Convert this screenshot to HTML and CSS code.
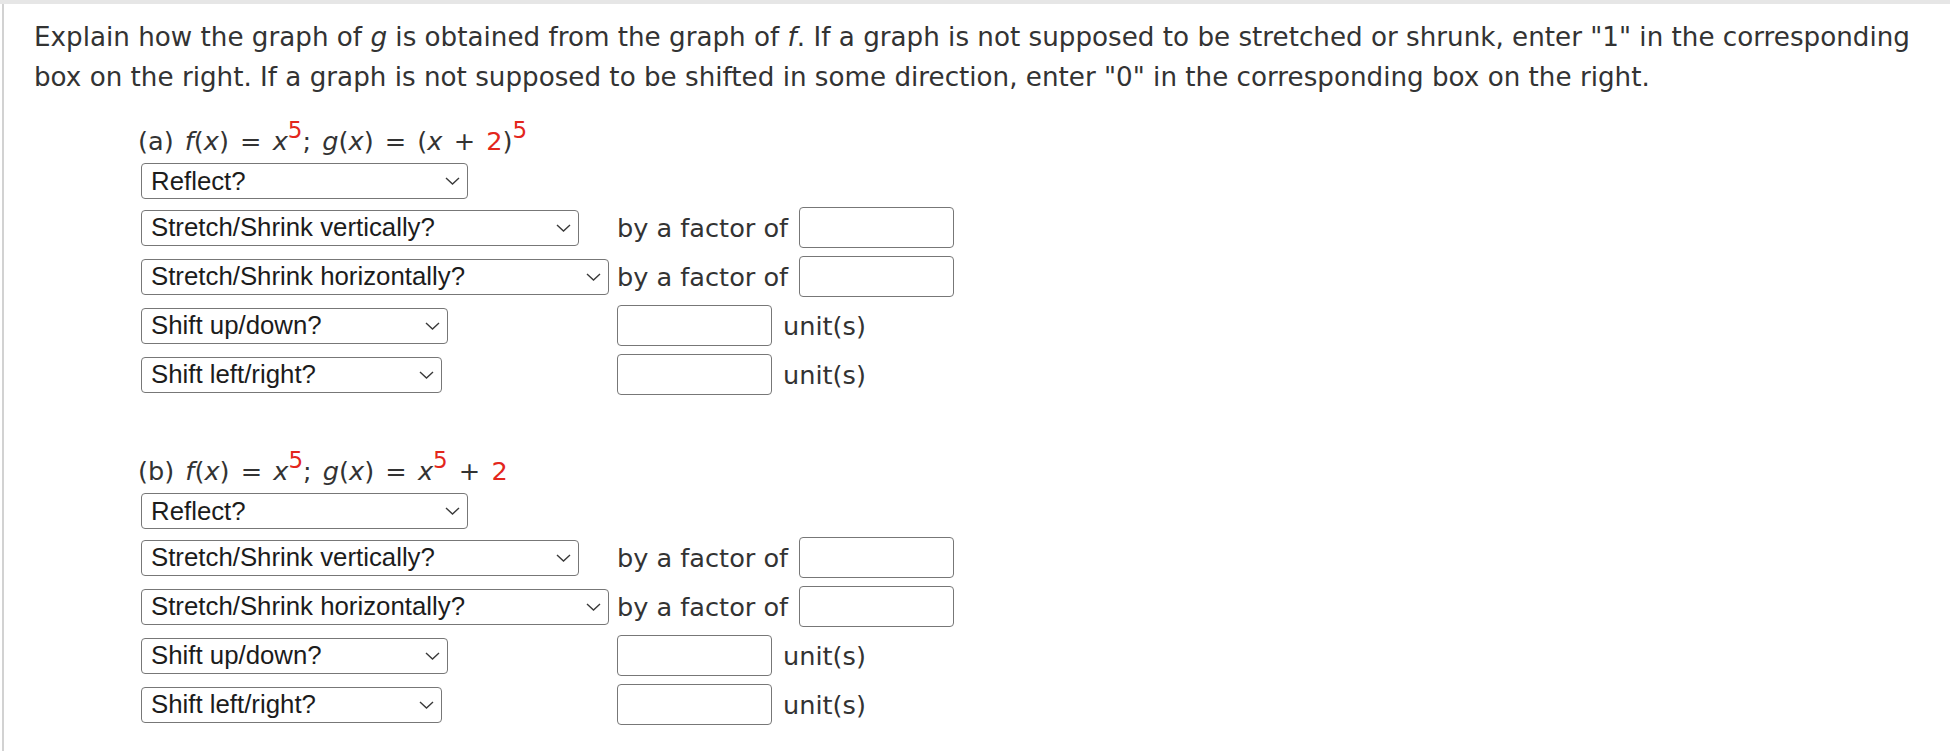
FILE: index.html
```html
<!DOCTYPE html>
<html lang="en">
<head>
<meta charset="utf-8">
<title>Transformations of graphs</title>
<link rel="stylesheet" href="styles.css">
</head>
<body>
<div class="topbar"></div>
<div class="frame">
  <p class="prompt">Explain how the graph of <i>g</i> is obtained from the graph of <i>f</i>. If a graph is not supposed to be stretched or shrunk, enter "1" in the corresponding box on the right. If a graph is not supposed to be shifted in some direction, enter "0" in the corresponding box on the right.</p>

  <section class="part">
    <div class="part-label">(a) <i>f</i>(<i>x</i>) = <i>x</i><sup class="red">5</sup>; <i>g</i>(<i>x</i>) = (<i>x</i> + <span class="red">2</span>)<sup class="red">5</sup></div>
    <div class="grid">
      <span class="sel w-reflect"><select><option>Reflect?</option></select><svg class="chev" viewBox="0 0 15 8"><path d="M1 1 L7.5 7 L14 1"/></svg></span>
      <span></span>
      <span class="sel w-vert"><select><option>Stretch/Shrink vertically?</option></select><svg class="chev" viewBox="0 0 15 8"><path d="M1 1 L7.5 7 L14 1"/></svg></span>
      <span class="cell">by a factor of <input type="text" class="box"></span>
      <span class="sel w-horiz"><select><option>Stretch/Shrink horizontally?</option></select><svg class="chev" viewBox="0 0 15 8"><path d="M1 1 L7.5 7 L14 1"/></svg></span>
      <span class="cell">by a factor of <input type="text" class="box"></span>
      <span class="sel w-updown"><select><option>Shift up/down?</option></select><svg class="chev" viewBox="0 0 15 8"><path d="M1 1 L7.5 7 L14 1"/></svg></span>
      <span class="cell"><input type="text" class="box"> unit(s)</span>
      <span class="sel w-leftright"><select><option>Shift left/right?</option></select><svg class="chev" viewBox="0 0 15 8"><path d="M1 1 L7.5 7 L14 1"/></svg></span>
      <span class="cell"><input type="text" class="box"> unit(s)</span>
    </div>
  </section>

  <section class="part">
    <div class="part-label">(b) <i>f</i>(<i>x</i>) = <i>x</i><sup class="red">5</sup>; <i>g</i>(<i>x</i>) = <i>x</i><sup class="red">5</sup> + <span class="red">2</span></div>
    <div class="grid">
      <span class="sel w-reflect"><select><option>Reflect?</option></select><svg class="chev" viewBox="0 0 15 8"><path d="M1 1 L7.5 7 L14 1"/></svg></span>
      <span></span>
      <span class="sel w-vert"><select><option>Stretch/Shrink vertically?</option></select><svg class="chev" viewBox="0 0 15 8"><path d="M1 1 L7.5 7 L14 1"/></svg></span>
      <span class="cell">by a factor of <input type="text" class="box"></span>
      <span class="sel w-horiz"><select><option>Stretch/Shrink horizontally?</option></select><svg class="chev" viewBox="0 0 15 8"><path d="M1 1 L7.5 7 L14 1"/></svg></span>
      <span class="cell">by a factor of <input type="text" class="box"></span>
      <span class="sel w-updown"><select><option>Shift up/down?</option></select><svg class="chev" viewBox="0 0 15 8"><path d="M1 1 L7.5 7 L14 1"/></svg></span>
      <span class="cell"><input type="text" class="box"> unit(s)</span>
      <span class="sel w-leftright"><select><option>Shift left/right?</option></select><svg class="chev" viewBox="0 0 15 8"><path d="M1 1 L7.5 7 L14 1"/></svg></span>
      <span class="cell"><input type="text" class="box"> unit(s)</span>
    </div>
  </section>
</div>
</body>
</html>
```

FILE: styles.css
```css
html, body {
  margin: 0;
  padding: 0;
  background: #ffffff;
}

body {
  font-family: "DejaVu Sans", Verdana, sans-serif;
  color: #333333;
}

.topbar {
  height: 4px;
  background: #e6e6e6;
}

.frame {
  margin-left: 2px;
  border-left: 2px solid #d2d2d2;
  padding: 13px 20px 0 30px;
  min-height: 747px;
  box-sizing: border-box;
}

.prompt {
  margin: 0;
  font-size: 26.2px;
  line-height: 40px;
}

.part {
  margin-left: 104px;
}

.part + .part {
  margin-top: 56px;
}

.part-label {
  margin-top: 24px;
  font-size: 25.6px;
  line-height: 40px;
  word-spacing: 3px;
}

.red {
  color: #e3261c;
}

sup {
  font-size: 0.9em;
  line-height: 0;
  vertical-align: 0.5em;
}

.grid {
  display: grid;
  grid-template-columns: auto auto;
  justify-content: start;
  justify-items: start;
  align-items: center;
  column-gap: 8px;
  row-gap: 8px;
  margin: 2px 0 0 3px;
}

.sel {
  position: relative;
  display: inline-block;
  height: 36px;
}

.sel select {
  appearance: none;
  -webkit-appearance: none;
  width: 100%;
  height: 36px;
  box-sizing: border-box;
  border: 1.5px solid #777777;
  border-radius: 4px;
  background: #ffffff;
  color: #1c1c1c;
  font-family: "Liberation Sans", Arial, sans-serif;
  font-size: 25.8px;
  line-height: 33px;
  padding: 0 30px 0 9px;
  margin: 0;
}

.chev {
  position: absolute;
  right: 8px;
  top: 14px;
  width: 15px;
  height: 8px;
  fill: none;
  stroke: #3a3a3a;
  stroke-width: 1.4;
  pointer-events: none;
}

.w-reflect { width: 327px; }
.w-vert { width: 438px; }
.w-horiz { width: 468px; }
.w-updown { width: 307px; }
.w-leftright { width: 301px; }

.cell {
  display: flex;
  align-items: center;
  gap: 11px;
  font-size: 25.6px;
  line-height: 40px;
  white-space: nowrap;
}

.box {
  width: 155px;
  height: 41px;
  box-sizing: border-box;
  border: 1.5px solid #777777;
  border-radius: 4px;
  background: #ffffff;
  margin: 0;
  padding: 0 6px;
  font-size: 20px;
}
```
